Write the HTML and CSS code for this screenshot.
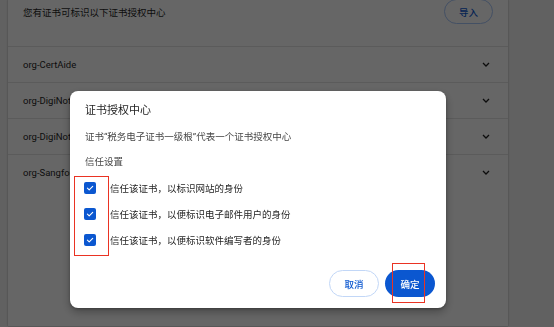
FILE: index.html
```html
<!DOCTYPE html>
<html lang="zh-CN">
<head>
<meta charset="utf-8">
<link rel="stylesheet" href="styles.css">
</head>
<body>
<div class="page">
  <div class="card">
    <div class="card-top">
      <span class="card-note">您有证书可标识以下证书授权中心</span>
      <button class="btn-import">导入</button>
    </div>
    <div class="row"><span>org-CertAide</span><svg class="chev" viewBox="0 0 8 5"><path d="M1 1 L4 4 L7 1" /></svg></div>
    <div class="row"><span>org-DigiNotar</span><svg class="chev" viewBox="0 0 8 5"><path d="M1 1 L4 4 L7 1" /></svg></div>
    <div class="row"><span>org-DigiNotar B.V.</span><svg class="chev" viewBox="0 0 8 5"><path d="M1 1 L4 4 L7 1" /></svg></div>
    <div class="row"><span>org-Sangfor</span><svg class="chev" viewBox="0 0 8 5"><path d="M1 1 L4 4 L7 1" /></svg></div>
  </div>
</div>
<div class="scrim"></div>
<div class="dialog">
  <div class="dlg-title">证书授权中心</div>
  <div class="dlg-desc">证书“税务电子证书一级根”代表一个证书授权中心</div>
  <div class="dlg-sub">信任设置</div>
  <div class="checks">
    <label class="check"><span class="box"><svg viewBox="0 0 12 12"><path d="M3.4 6.2 L5.2 7.9 L8.7 4.4" /></svg></span><span>信任该证书，以标识网站的身份</span></label>
    <label class="check"><span class="box"><svg viewBox="0 0 12 12"><path d="M3.4 6.2 L5.2 7.9 L8.7 4.4" /></svg></span><span>信任该证书，以便标识电子邮件用户的身份</span></label>
    <label class="check"><span class="box"><svg viewBox="0 0 12 12"><path d="M3.4 6.2 L5.2 7.9 L8.7 4.4" /></svg></span><span>信任该证书，以便标识软件编写者的身份</span></label>
  </div>
  <div class="actions">
    <button class="btn-cancel">取消</button>
    <button class="btn-ok">确定</button>
  </div>
</div>
<div class="mark mark-checks"></div>
<div class="mark mark-ok"></div>
</body>
</html>
```
FILE: styles.css
```css
html, body {
  margin: 0;
  padding: 0;
  height: 100%;
  overflow: hidden;
}
body {
  background: #f3f3f3;
  font-family: Roboto, "Noto Sans CJK SC", sans-serif;
  font-size: 9.5px;
  color: #1f1f1f;
}
.page {
  padding-left: 8px;
  height: 100%;
}
.card {
  width: 500px;
  height: 100%;
  background: #fff;
  box-shadow: 0 0 1px rgba(0,0,0,0.35), 0 0 3px rgba(0,0,0,0.12);
}
.card-top {
  display: flex;
  align-items: center;
  justify-content: space-between;
  height: 25px;
  margin-top: -1px;
  padding: 0 15px 22px 15px;
  border-bottom: 1px solid #e3e3e3;
}
.card-note {
  color: #1f1f1f;
}
.btn-import {
  width: 49px;
  height: 25px;
  border-radius: 13px;
  border: 1px solid #a8c7fa;
  background: #fff;
  color: #0b57d0;
  font-family: inherit;
  font-size: 9.5px;
  font-weight: 500;
  padding: 0;
}
.row {
  display: flex;
  align-items: center;
  justify-content: space-between;
  height: 35px;
  padding: 0 18px 0 15px;
  border-bottom: 1px solid #e3e3e3;
}
.row:last-child {
  border-bottom: none;
}
.chev {
  width: 8px;
  height: 5px;
  fill: none;
  stroke: #1f1f1f;
  stroke-width: 1.3;
}
.scrim {
  position: fixed;
  inset: 0;
  background: rgba(0,0,0,0.6);
}
.dialog {
  position: fixed;
  left: 70px;
  top: 91px;
  width: 376px;
  box-sizing: border-box;
  padding: 13px 11px 11px 15px;
  background: #fff;
  border-radius: 8px;
  box-shadow: 0 4px 10px rgba(0,0,0,0.3), 0 1px 3px rgba(0,0,0,0.25);
}
.dlg-title {
  font-size: 11px;
  line-height: 14px;
  color: #1f1f1f;
}
.dlg-desc {
  margin-top: 12px;
  line-height: 14px;
  color: #474747;
}
.dlg-sub {
  margin-top: 11px;
  line-height: 14px;
  color: #474747;
}
.checks {
  margin-top: 6px;
  display: flex;
  flex-direction: column;
}
.check {
  display: flex;
  align-items: center;
  height: 26px;
  gap: 14px;
  margin-left: -1px;
  color: #1f1f1f;
}
.box {
  width: 12px;
  height: 12px;
  border-radius: 2px;
  background: #0b57d0;
  display: flex;
}
.box svg {
  width: 12px;
  height: 12px;
  fill: none;
  stroke: #fff;
  stroke-width: 1.1;
  stroke-linecap: round;
  stroke-linejoin: round;
}
.actions {
  margin-top: 17px;
  display: flex;
  justify-content: flex-end;
  gap: 6px;
}
.actions button {
  width: 50px;
  height: 27px;
  border-radius: 14px;
  font-family: inherit;
  font-size: 9.5px;
  font-weight: 500;
  padding: 0;
}
.btn-cancel {
  background: #fff;
  border: 1px solid #c2d7f7;
  color: #0b57d0;
}
.btn-ok {
  background: #0b57d0;
  border: none;
  color: #fff;
}
.mark {
  position: fixed;
  border: 1.5px solid #ea3323;
  box-sizing: border-box;
}
.mark-checks {
  left: 74px;
  top: 176px;
  width: 35px;
  height: 80px;
}
.mark-ok {
  left: 392px;
  top: 263px;
  width: 33px;
  height: 40px;
}
```
